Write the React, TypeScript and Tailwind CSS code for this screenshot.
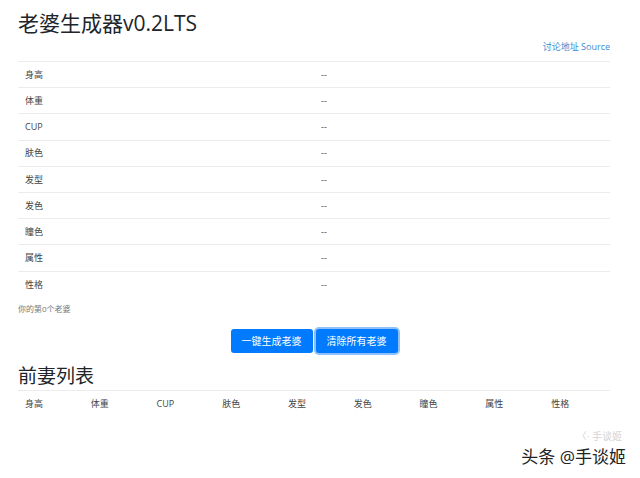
const fields = ['身高', '体重', 'CUP', '肤色', '发型', '发色', '瞳色', '属性', '性格'];

export default function App() {
  return (
    <div
      className="relative min-h-[478px] w-[640px] bg-white text-[#212529]"
      style={{ fontFamily: '"Open Sans", "Noto Sans CJK SC", sans-serif' }}
    >
      <div className="mx-[18px] w-[592px]">
        {/* Title */}
        <h1 className="pt-[8px] text-[21px] leading-[30px] font-normal">老婆生成器v0.2LTS</h1>

        {/* Link */}
        <div className="mt-[2px] flex justify-end">
          <a className="text-[9px] leading-[14px] text-[#3a8ad0]">讨论地址 Source</a>
        </div>

        {/* Current table */}
        <table className="mt-[7px] w-full border-collapse text-[9px] text-[#444]">
          <tbody>
            {fields.map((f) => (
              <tr key={f} className="h-[26.2px] border-t border-[#ececec]">
                <td className="w-[303px] pl-[7px] align-middle">{f}</td>
                <td className="align-middle">--</td>
              </tr>
            ))}
          </tbody>
        </table>

        <div className="mt-[6px] text-[8px] leading-[12px] text-[#777]">你的第0个老婆</div>

        {/* Buttons */}
        <div className="mt-[14px] flex justify-center gap-[3px]">
          <button className="h-[24px] rounded-[3px] bg-[#007bff] px-[11px] text-[10px] text-white">
            一键生成老婆
          </button>
          <button className="h-[24px] rounded-[3px] bg-[#007bff] px-[11px] text-[10px] text-white ring-2 ring-[#8fc0fa]">
            清除所有老婆
          </button>
        </div>

        {/* History */}
        <h2 className="mt-[10px] text-[19px] leading-[26px] font-normal">前妻列表</h2>
        <table className="mt-[1px] w-full table-fixed border-collapse text-[9px] text-[#444]">
          <thead>
            <tr className="h-[26px] border-t border-[#ececec]">
              {fields.map((f) => (
                <th key={f} className="pl-[7px] text-left font-normal align-middle">
                  {f}
                </th>
              ))}
            </tr>
          </thead>
        </table>
      </div>

      {/* Watermark */}
      <div className="absolute right-[14px] top-[430px] flex flex-col items-end">
        <div className="mr-[4px] mb-[4px] text-[10px] leading-[12px] text-[#d4d4d4]">〈· 手谈姬</div>
        <div className="text-[17px] leading-[22px] text-[#222]">头条 @手谈姬</div>
      </div>
    </div>
  );
}
